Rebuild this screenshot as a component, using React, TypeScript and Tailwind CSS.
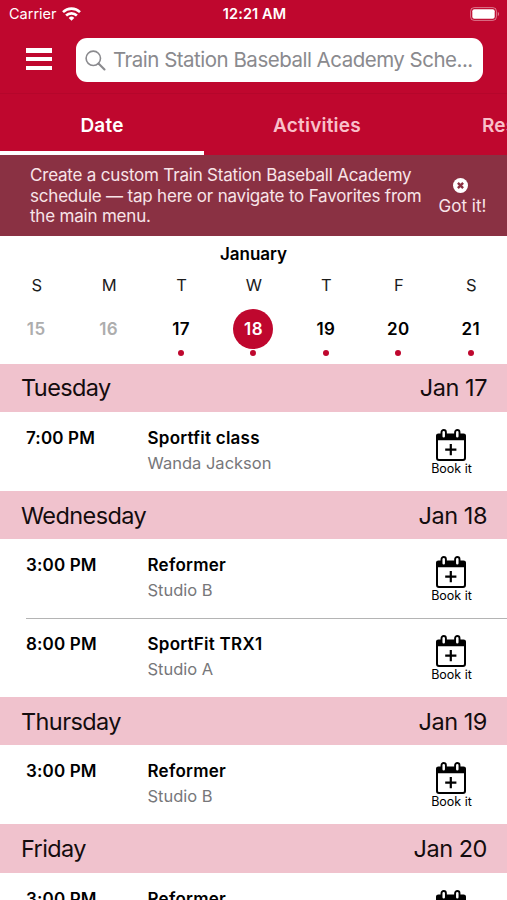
import React, { useState } from 'react';

interface ClassItem {
  time: string;
  name: string;
  detail: string;
}

interface ScheduleDay {
  weekday: string;
  date: string;
  classes: ClassItem[];
}

const tabs = [
  { label: 'Date', layout: 'w-[204px] text-center' },
  { label: 'Activities', layout: 'w-[226px] text-center' },
  { label: 'Resources', layout: 'w-[190px] pl-[52px] text-left' },
];

const week = [
  { letter: 'S', day: 15, past: true },
  { letter: 'M', day: 16, past: true },
  { letter: 'T', day: 17, past: false },
  { letter: 'W', day: 18, past: false },
  { letter: 'T', day: 19, past: false },
  { letter: 'F', day: 20, past: false },
  { letter: 'S', day: 21, past: false },
];

const schedule: ScheduleDay[] = [
  {
    weekday: 'Tuesday',
    date: 'Jan 17',
    classes: [{ time: '7:00 PM', name: 'Sportfit class', detail: 'Wanda Jackson' }],
  },
  {
    weekday: 'Wednesday',
    date: 'Jan 18',
    classes: [
      { time: '3:00 PM', name: 'Reformer', detail: 'Studio B' },
      { time: '8:00 PM', name: 'SportFit TRX1', detail: 'Studio A' },
    ],
  },
  {
    weekday: 'Thursday',
    date: 'Jan 19',
    classes: [{ time: '3:00 PM', name: 'Reformer', detail: 'Studio B' }],
  },
  {
    weekday: 'Friday',
    date: 'Jan 20',
    classes: [{ time: '3:00 PM', name: 'Reformer', detail: 'Studio B' }],
  },
];

const WifiIcon = () => (
  <svg className="w-[19px] h-[14px]" viewBox="0 0 19 14" fill="none" stroke="#fff" strokeWidth="2.6">
    <path d="M1 5.1a12.2 12.2 0 0 1 17 0" />
    <path d="M4.1 8.5a7.8 7.8 0 0 1 10.8 0" />
    <path d="M9.5 13.7 6.7 10.9a4.1 4.1 0 0 1 5.6 0z" fill="#fff" stroke="none" />
  </svg>
);

const BatteryIcon = () => (
  <svg className="w-[30px] h-[14px]" viewBox="0 0 30 14" fill="none">
    <rect x="0.6" y="0.6" width="25.8" height="12.8" rx="3.6" stroke="#fff" strokeOpacity="0.45" strokeWidth="1" />
    <rect x="2.3" y="2.3" width="22.4" height="9.4" rx="2" fill="#fff" />
    <path d="M27.8 4.8c1.6.7 1.6 3.7 0 4.4z" fill="#fff" fillOpacity="0.5" />
  </svg>
);

const SearchIcon = () => (
  <svg className="w-[21px] h-[21px] shrink-0" viewBox="0 0 21 21" fill="none" stroke="#8a8a8e">
    <circle cx="8.3" cy="8.3" r="7.2" strokeWidth="1.6" />
    <path d="M13.5 13.5l6 6" strokeWidth="2.1" strokeLinecap="round" />
  </svg>
);

const CloseIcon = () => (
  <svg className="w-[15px] h-[15px]" viewBox="0 0 15 15">
    <circle cx="7.5" cy="7.5" r="7.5" fill="#fff" />
    <path d="M4.9 4.9l5.2 5.2M10.1 4.9l-5.2 5.2" stroke="#8a3143" strokeWidth="2.4" />
  </svg>
);

const CalendarPlusIcon = () => (
  <svg className="w-[30px] h-[32px]" viewBox="0 0 30 32" fill="none">
    <rect x="1" y="6" width="28" height="25" rx="2" stroke="#000" strokeWidth="2" />
    <path d="M0 11.2V7a2.4 2.4 0 0 1 2.4-2.4h25.2A2.4 2.4 0 0 1 30 7v4.2z" fill="#000" />
    <rect x="5.5" y="1" width="4.4" height="8.4" rx="2.2" fill="#fff" stroke="#000" strokeWidth="1.9" />
    <rect x="19.1" y="1" width="4.4" height="8.4" rx="2.2" fill="#fff" stroke="#000" strokeWidth="1.9" />
    <path d="M9.2 20.6h11.2M14.8 15v11.2" stroke="#000" strokeWidth="2.2" />
  </svg>
);

const StatusBar: React.FC = () => (
  <div className="h-7 grid grid-cols-3 items-center pl-[9px] pr-[7px] text-white text-[14.5px]">
    <div className="flex items-center gap-[5px]">
      <span>Carrier</span>
      <WifiIcon />
    </div>
    <span className="text-center font-semibold tracking-[0.1px]">12:21 AM</span>
    <div className="flex justify-end">
      <BatteryIcon />
    </div>
  </div>
);

const ClassRow: React.FC<{ item: ClassItem; divided: boolean }> = ({ item, divided }) => (
  <div className="pl-[26px]">
    <div className={`h-[78.75px] flex leading-6 ${divided ? 'border-t border-[#b4b4b4] pt-[13px]' : 'pt-[14px]'}`}>
      <div className="w-[121.5px] shrink-0 text-[17px] tracking-[0.15px] font-semibold">{item.time}</div>
      <div className="flex-1">
        <div className="text-[17px] tracking-[0.25px] font-semibold">{item.name}</div>
        <div className="mt-px text-[16.5px] text-[#77777a]">{item.detail}</div>
      </div>
      <button className="w-[60px] mr-[26px] pt-[3px] flex flex-col items-center self-start">
        <CalendarPlusIcon />
        <span className="pl-px text-[12.5px] leading-[15px]">Book it</span>
      </button>
    </div>
  </div>
);

const App: React.FC = () => {
  const [activeTab, setActiveTab] = useState('Date');
  const [selectedDay, setSelectedDay] = useState(18);

  return (
    <div className="w-[507px] h-[900px] overflow-hidden bg-white text-black font-['Inter',sans-serif]">
      {/* Header */}
      <header className="bg-[#bf072e]">
        <StatusBar />
        <div className="h-[66px] flex pt-[10px] pl-[26px] border-b border-[#b5062b]">
          <button className="mt-[10px] h-[22px] w-[26px] flex flex-col justify-between" aria-label="Menu">
            <span className="w-full h-[4.5px] bg-white" />
            <span className="w-full h-[4.5px] bg-white" />
            <span className="w-full h-[4.5px] bg-white" />
          </button>
          <div className="ml-[23.5px] w-[407px] h-[44px] bg-white rounded-[11px] flex items-center pl-[9.5px] gap-[7px] text-[#8a8a8e]">
            <SearchIcon />
            <span className="pt-px text-[20.5px] tracking-[-0.5px] whitespace-nowrap">
              Train Station Baseball Academy Sche...
            </span>
          </div>
        </div>

        <nav className="h-[61px] flex overflow-hidden">
          {tabs.map(tab => (
            <button
              key={tab.label}
              onClick={() => setActiveTab(tab.label)}
              className={`${tab.layout} shrink-0 pt-[7px] text-[19px] tracking-[0.2px] font-semibold border-b-4 ${
                activeTab === tab.label ? 'text-white border-white' : 'text-[#f9c0ca] border-transparent'
              }`}
            >
              {tab.label}
            </button>
          ))}
        </nav>
      </header>

      {/* Favorites hint */}
      <div className="h-[81px] bg-[#8a3143] text-[#f8e4e8] flex">
        <p className="pl-[30px] pt-[10px] w-[435px] shrink-0 text-[17px] tracking-[-0.2px] leading-[20.5px] whitespace-nowrap">
          Create a custom Train Station Baseball Academy
          <br />
          schedule — tap here or navigate to Favorites from
          <br />
          the main menu.
        </p>
        <button className="w-[55px] pt-[23px] pr-[4px] flex flex-col items-center self-start">
          <CloseIcon />
          <span className="mt-[3px] pl-[4px] text-[17px] leading-5 whitespace-nowrap">Got it!</span>
        </button>
      </div>

      {/* Week picker */}
      <div className="h-[127.6px]">
        <div className="pt-[6px] text-center text-[17px] leading-6 font-semibold">January</div>
        <div className="mt-[7px] grid grid-cols-7 text-center">
          {week.map(({ letter, day, past }) => (
            <button key={day} onClick={() => setSelectedDay(day)} className="flex flex-col items-center">
              <span className="pl-px text-[16.5px] leading-6 text-[#1c1c1c]">{letter}</span>
              <span
                className={`mt-[12px] w-10 h-10 pt-px rounded-full flex items-center justify-center text-[17px] tracking-[0.4px] font-semibold ${
                  selectedDay === day ? 'bg-[#bf072e] text-white' : past ? 'text-[#adadad]' : 'text-black'
                }`}
              >
                {day}
              </span>
              {!past && <span className="mt-px w-[6px] h-[6px] rounded-full bg-[#bf072e]" />}
            </button>
          ))}
        </div>
      </div>

      {/* Schedule */}
      {schedule.map(section => (
        <section key={section.weekday}>
          <h2 className="h-[48.5px] pt-[0.5px] bg-[#f0c2cd] flex items-center justify-between pl-[21px] pr-[20px] text-[23.5px] text-[#140c0e]">
            <span className="tracking-[-0.6px]">{section.weekday}</span>
            <span className="tracking-[-0.45px]">{section.date}</span>
          </h2>
          {section.classes.map((item, index) => (
            <ClassRow key={index} item={item} divided={index > 0} />
          ))}
        </section>
      ))}
    </div>
  );
};

export default App;
